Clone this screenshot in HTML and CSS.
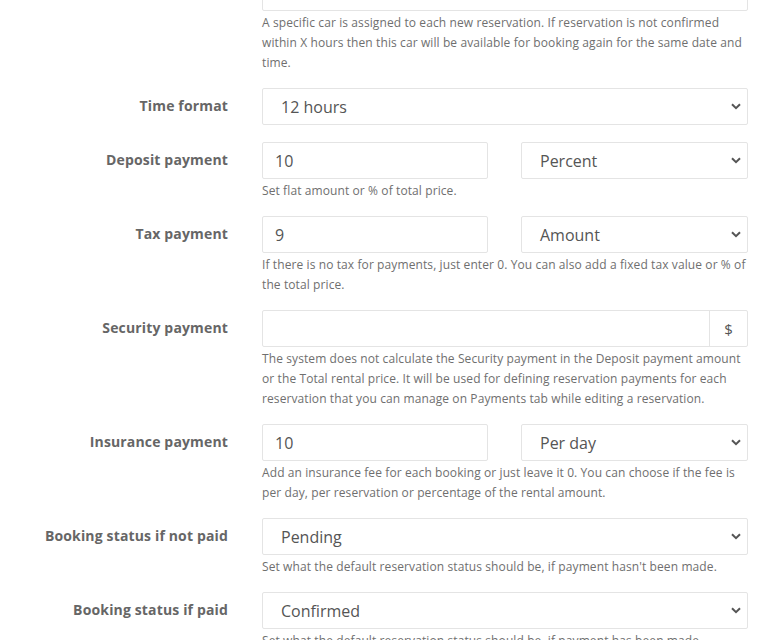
FILE: index.html
```html
<!DOCTYPE html>
<html lang="en">
<head>
<meta charset="utf-8">
<title>Payment settings</title>
<link rel="stylesheet" href="styles.css">
</head>
<body>
<form class="form">
  <div class="row first">
    <div class="label"></div>
    <div class="field">
      <div class="control select"><span class="value"></span><svg class="chev" width="10" height="7" viewBox="0 0 10 7"><path d="M1 1.2 L5 5.2 L9 1.2" fill="none" stroke="#555" stroke-width="2"/></svg></div>
      <p class="help">A specific car is assigned to each new reservation. If reservation is not confirmed within X hours then this car will be available for booking again for the same date and time.</p>
    </div>
  </div>

  <div class="row time">
    <div class="label">Time format</div>
    <div class="field">
      <div class="control select"><span class="value">12 hours</span><svg class="chev" width="10" height="7" viewBox="0 0 10 7"><path d="M1 1.2 L5 5.2 L9 1.2" fill="none" stroke="#555" stroke-width="2"/></svg></div>
    </div>
  </div>

  <div class="row">
    <div class="label">Deposit payment</div>
    <div class="field">
      <div class="pair">
        <div class="control input">10</div>
        <div class="control select"><span class="value">Percent</span><svg class="chev" width="10" height="7" viewBox="0 0 10 7"><path d="M1 1.2 L5 5.2 L9 1.2" fill="none" stroke="#555" stroke-width="2"/></svg></div>
      </div>
      <p class="help">Set flat amount or % of total price.</p>
    </div>
  </div>

  <div class="row">
    <div class="label">Tax payment</div>
    <div class="field">
      <div class="pair">
        <div class="control input">9</div>
        <div class="control select"><span class="value">Amount</span><svg class="chev" width="10" height="7" viewBox="0 0 10 7"><path d="M1 1.2 L5 5.2 L9 1.2" fill="none" stroke="#555" stroke-width="2"/></svg></div>
      </div>
      <p class="help">If there is no tax for payments, just enter 0. You can also add a fixed tax value or % of the total price.</p>
    </div>
  </div>

  <div class="row">
    <div class="label">Security payment</div>
    <div class="field">
      <div class="control group">
        <span class="group-input"></span>
        <span class="addon">$</span>
      </div>
      <p class="help">The system does not calculate the Security payment in the Deposit payment amount or the Total rental price. It will be used for defining reservation payments for each reservation that you can manage on Payments tab while editing a reservation.</p>
    </div>
  </div>

  <div class="row">
    <div class="label">Insurance payment</div>
    <div class="field">
      <div class="pair">
        <div class="control input">10</div>
        <div class="control select"><span class="value">Per day</span><svg class="chev" width="10" height="7" viewBox="0 0 10 7"><path d="M1 1.2 L5 5.2 L9 1.2" fill="none" stroke="#555" stroke-width="2"/></svg></div>
      </div>
      <p class="help">Add an insurance fee for each booking or just leave it 0. You can choose if the fee is per day, per reservation or percentage of the rental amount.</p>
    </div>
  </div>

  <div class="row">
    <div class="label">Booking status if not paid</div>
    <div class="field">
      <div class="control select"><span class="value">Pending</span><svg class="chev" width="10" height="7" viewBox="0 0 10 7"><path d="M1 1.2 L5 5.2 L9 1.2" fill="none" stroke="#555" stroke-width="2"/></svg></div>
      <p class="help">Set what the default reservation status should be, if payment hasn't been made.</p>
    </div>
  </div>

  <div class="row">
    <div class="label">Booking status if paid</div>
    <div class="field">
      <div class="control select"><span class="value">Confirmed</span><svg class="chev" width="10" height="7" viewBox="0 0 10 7"><path d="M1 1.2 L5 5.2 L9 1.2" fill="none" stroke="#555" stroke-width="2"/></svg></div>
      <p class="help">Set what the default reservation status should be, if payment has been made.</p>
    </div>
  </div>
</form>
</body>
</html>
```

FILE: styles.css
```css
html, body {
  margin: 0;
  padding: 0;
  background: #ffffff;
  overflow: hidden;
}

body {
  font-family: "Open Sans", "Noto Sans", sans-serif;
  color: #555;
}

.form {
  width: 748px;
  margin-top: -26px;
}

.row {
  display: grid;
  grid-template-columns: 228px 486px;
  column-gap: 34px;
  margin-bottom: 15px;
}

.row.time {
  margin-bottom: 17px;
}

.label {
  text-align: right;
  font-weight: 700;
  font-size: 14px;
  line-height: 36px;
  letter-spacing: 0.15px;
  color: #666;
  white-space: nowrap;
}

.field {
  min-width: 0;
}

.control {
  box-sizing: border-box;
  height: 37px;
  border: 1px solid #e4e4e4;
  border-radius: 2px;
  background: #fff;
  font-size: 16px;
  color: #555;
  display: flex;
  align-items: center;
}

.input {
  padding: 0 12px;
}

.select {
  padding: 0 6px 0 18px;
  justify-content: space-between;
}

.chev {
  flex: none;
}

.pair {
  display: grid;
  grid-template-columns: 226px 227px;
  column-gap: 33px;
}

.group {
  padding: 0;
}

.group-input {
  flex: 1;
  height: 100%;
}

.addon {
  box-sizing: border-box;
  width: 38px;
  height: 100%;
  border-left: 1px solid #e4e4e4;
  display: flex;
  align-items: center;
  justify-content: center;
  font-size: 15px;
  color: #555;
}

.help {
  margin: 2px 0 0;
  font-size: 12px;
  line-height: 20px;
  letter-spacing: 0.1px;
  color: #6f6f6f;
}
```
